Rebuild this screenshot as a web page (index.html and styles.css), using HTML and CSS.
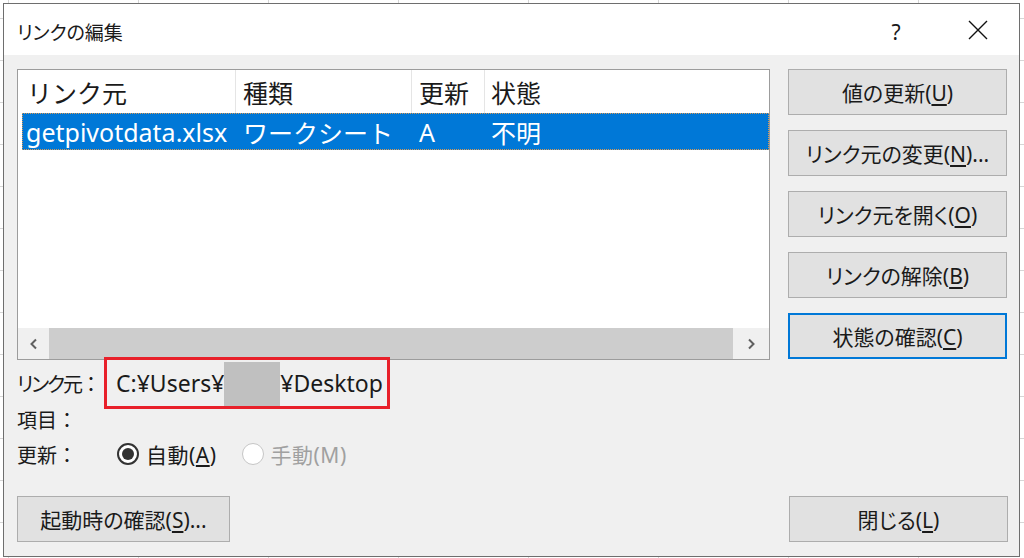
FILE: index.html
```
<!DOCTYPE html>
<html lang="ja">
<head>
    <meta charset="UTF-8">
    <title>リンクの編集</title>
    <link rel="stylesheet" href="styles.css">
</head>
<body>
    <div class="dialog">
        <div class="titlebar">
            <span class="title">リンクの編集</span>
            <span class="help">?</span>
            <span class="close">
                <svg width="20" height="20" viewBox="0 0 20 20"><path d="M1 1 L19 19 M19 1 L1 19" stroke="#111" stroke-width="1.4" fill="none"/></svg>
            </span>
        </div>
        <div class="body">
            <div class="main">
                <div class="left">
                    <div class="listbox">
                        <div class="list-head">
                            <div class="cell">リンク元</div>
                            <div class="cell">種類</div>
                            <div class="cell">更新</div>
                            <div class="cell last">状態</div>
                        </div>
                        <div class="list-row selected">
                            <div class="cell">getpivotdata.xlsx</div>
                            <div class="cell">ワークシート</div>
                            <div class="cell">A</div>
                            <div class="cell">不明</div>
                        </div>
                        <div class="list-fill"></div>
                        <div class="hscroll">
                            <div class="arrow arrow-left">
                                <svg width="10" height="12" viewBox="0 0 10 12"><path d="M7 1.5 L2.5 6 L7 10.5" stroke="#606060" stroke-width="2" fill="none"/></svg>
                            </div>
                            <div class="thumb"></div>
                            <div class="arrow arrow-right">
                                <svg width="10" height="12" viewBox="0 0 10 12"><path d="M3 1.5 L7.5 6 L3 10.5" stroke="#606060" stroke-width="2" fill="none"/></svg>
                            </div>
                        </div>
                    </div>
                    <div class="info">
                        <div class="info-row first">
                            <span class="label tight">リンク元<span class="colon">：</span></span>
                            <span class="path-box">C:¥Users¥<span class="masked"></span>¥Desktop</span>
                        </div>
                        <div class="info-row second">
                            <span class="label">項目<span class="colon">：</span></span>
                        </div>
                        <div class="info-row third">
                            <span class="label wide">更新<span class="colon">：</span></span>
                            <label class="radio">
                                <span class="dot checked"></span>
                                <span>自動(<u>A</u>)</span>
                            </label>
                            <label class="radio disabled">
                                <span class="dot"></span>
                                <span>手動(M)</span>
                            </label>
                        </div>
                    </div>
                </div>
                <div class="side">
                    <button class="btn">値の更新(<u>U</u>)</button>
                    <button class="btn">リンク元の変更(<u>N</u>)...</button>
                    <button class="btn">リンク元を開く(<u>O</u>)</button>
                    <button class="btn">リンクの解除(<u>B</u>)</button>
                    <button class="btn focused">状態の確認(<u>C</u>)</button>
                </div>
            </div>
            <div class="footer">
                <button class="btn btn-startup">起動時の確認(<u>S</u>)...</button>
                <button class="btn btn-close">閉じる(<u>L</u>)</button>
            </div>
        </div>
    </div>
</body>
</html>
```

FILE: styles.css
```
* {
    box-sizing: border-box;
    font-family: "Noto Sans", "Noto Sans CJK JP", sans-serif;
}

body {
    margin: 0;
    width: 1024px;
    height: 558px;
    overflow: hidden;
    background-color: #fff;
    background-image:
        linear-gradient(to right, #d6d6d6 1px, transparent 1px),
        linear-gradient(to bottom, #d6d6d6 1px, transparent 1px);
    background-size: 130px 42px;
    background-position: 8px 18px;
}

.dialog {
    margin: 3px 0 0 3px;
    width: 1017px;
    height: 554px;
    border: 1px solid #6e6e6e;
    background-color: #f0f0f0;
    display: flex;
    flex-direction: column;
    color: #1a1a1a;
}

.titlebar {
    height: 51px;
    flex: none;
    background-color: #fff;
    display: flex;
    align-items: center;
    padding: 4px 14px 0 13px;
}

.title {
    flex: 1;
    font-size: 19px;
    font-feature-settings: "palt";
}

.help {
    width: 40px;
    margin-right: 35px;
    text-align: center;
    font-size: 21px;
}

.close {
    width: 54px;
    display: flex;
    justify-content: center;
    margin-top: -3px;
}

.body {
    flex: 1;
    display: flex;
    flex-direction: column;
    padding: 14px 11px 14px 13px;
}

.main {
    display: flex;
    gap: 18px;
}

.left {
    width: 753px;
}

.listbox {
    height: 291px;
    border: 1px solid #9c9c9c;
    background-color: #fff;
    display: flex;
    flex-direction: column;
}

.list-head {
    height: 43px;
    flex: none;
    display: grid;
    grid-template-columns: 218px 176px 73px 1fr;
    font-size: 25px;
}

.list-head .cell {
    border-right: 1px solid #e5e5e5;
    display: flex;
    align-items: center;
    padding-left: 7px;
}

.list-head .cell:first-child {
    padding-left: 9px;
}

.list-head .cell.last {
    border-right: none;
    padding-left: 6px;
}

.list-row {
    height: 37px;
    flex: none;
    margin-left: 4px;
    display: grid;
    grid-template-columns: 214px 176px 73px 1fr;
    font-size: 25px;
}

.list-row .cell {
    display: flex;
    align-items: center;
    padding-left: 7px;
    white-space: nowrap;
}

.list-row .cell:first-child {
    padding-left: 4px;
}

.list-row .cell:last-child {
    padding-left: 6px;
}

.selected {
    background-color: #0078d7;
    color: #fff;
    outline: 1px dotted #d99a55;
    outline-offset: -1px;
}

.list-fill {
    flex: 1;
}

.hscroll {
    height: 31px;
    flex: none;
    display: flex;
}

.arrow {
    background-color: #f0f0f0;
    display: flex;
    align-items: center;
    justify-content: center;
}

.arrow-left {
    width: 31px;
}

.arrow-right {
    width: 36px;
}

.thumb {
    flex: 1;
    background-color: #cdcdcd;
}

.info-row {
    display: flex;
    align-items: center;
}

.label {
    width: 87px;
    font-size: 20px;
    font-feature-settings: "palt";
    white-space: nowrap;
}

.label.tight {
    letter-spacing: -2px;
}

.colon {
    font-feature-settings: normal;
}

.label.wide {
    width: 100px;
}

.info-row.first {
    margin-top: -3px;
    height: 52px;
}

.path-box {
    height: 52px;
    border: 3px solid #e8202a;
    display: flex;
    align-items: center;
    padding: 0 4px 0 9px;
    font-size: 23px;
    white-space: nowrap;
}

.masked {
    display: inline-block;
    width: 56px;
    height: 44px;
    margin-top: 2px;
    background-color: #c0c0c0;
}

.info-row.second {
    height: 20px;
}

.info-row.third {
    margin-top: 13px;
    height: 24px;
}

.radio {
    display: flex;
    align-items: center;
    gap: 7px;
    font-size: 21px;
    letter-spacing: 0.5px;
    margin-right: 25px;
}

.dot {
    width: 22px;
    height: 22px;
    border-radius: 50%;
    border: 2px solid #333;
    background-color: #fff;
    display: flex;
    align-items: center;
    justify-content: center;
}

.dot.checked::after {
    content: "";
    width: 12px;
    height: 12px;
    border-radius: 50%;
    background-color: #333;
}

.radio.disabled {
    color: #a0a0a0;
}

.radio.disabled .dot {
    border: 1px solid #c6c6c6;
}

.side {
    width: 219px;
    display: flex;
    flex-direction: column;
    gap: 15px;
}

.btn {
    height: 46px;
    border: 1px solid #adadad;
    background-color: #e1e1e1;
    color: #1a1a1a;
    font-size: 21px;
    font-feature-settings: "palt";
    padding: 0;
    white-space: nowrap;
}

.btn u {
    text-underline-offset: 3px;
}

.btn.focused {
    border: 2px solid #0078d7;
}

.footer {
    margin-top: auto;
    display: flex;
    justify-content: space-between;
}

.btn-startup {
    width: 213px;
}

.btn-close {
    width: 219px;
}
```
